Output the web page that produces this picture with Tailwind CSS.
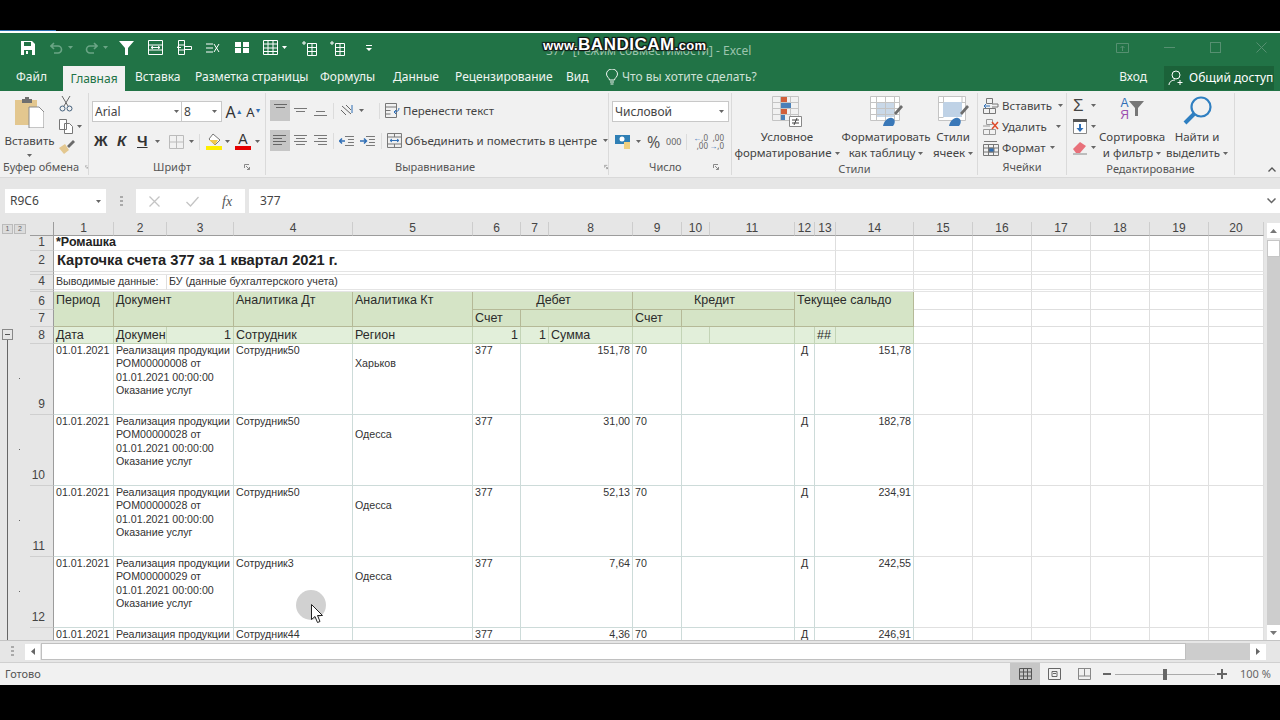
<!DOCTYPE html>
<html lang="ru">
<head>
<meta charset="utf-8">
<title>Excel</title>
<script src="https://cdn.jsdelivr.net/npm/@tailwindcss/browser@4"></script>
</head>
<body class="bg-black">
<div class="relative w-[1280px] h-[720px] overflow-hidden bg-black font-['Noto_Sans',sans-serif] text-[#444]">
  <div class="h-[30px]"></div>
  <div class="h-px w-[56px] bg-[#2b6fb0]"></div>
  <div class="h-[2px] bg-white"></div>

  <!-- title bar -->
  <div class="h-[29px] bg-[#217346] flex items-center pl-[21px] relative">
    <svg class="w-[14px] h-[14px]" viewBox="0 0 14 14"><path d="M0 0h11l3 3v11H0z" fill="#fff"/><path d="M3 1h7v4H3zM3 9h8v5H3z" fill="#217346"/><path d="M5 10h2v3H5z" fill="#fff"/></svg>
    <svg class="w-[13px] h-[12px] ml-[15px]" viewBox="0 0 13 12" fill="none" stroke="#6aa585" stroke-width="1.6"><path d="M4 1 1 4l3 3M1 4h7a3.5 3.5 0 0 1 0 7H4"/></svg>
    <svg class="w-[5px] h-[3px] ml-[5px]" viewBox="0 0 5 3"><path d="M0 0h5L2.500 3z" fill="#6aa585"/></svg>
    <svg class="w-[13px] h-[12px] ml-[12px]" viewBox="0 0 13 12" fill="none" stroke="#6aa585" stroke-width="1.6"><path d="m9 1 3 3-3 3M12 4H5a3.500 3.500 0 0 0 0 7h4"/></svg>
    <svg class="w-[5px] h-[3px] ml-[5px]" viewBox="0 0 5 3"><path d="M0 0h5L2.500 3z" fill="#6aa585"/></svg>
    <svg class="w-[15px] h-[14px] ml-[11px]" viewBox="0 0 15 14"><path d="M0 0h15L9 7v7H6V7z" fill="#fff"/></svg>
    <svg class="w-[15px] h-[15px] ml-[14px]" viewBox="0 0 15 15" fill="none" stroke="#fff"><path d="M.5.500h14v14H.5zM.5 5h14M.5 10h14M3 7.500h9M3 7.500l2-1.500M3 7.500 5 9M12 7.500 10 6M12 7.500 10 9"/></svg>
    <svg class="w-[15px] h-[15px] ml-[14px]" viewBox="0 0 15 15" fill="none" stroke="#fff"><path d="M1.500.500h6v14h-6zM1.500 5h6M1.500 10h6M8 6.500h6.500v3H8M4 7.500H0M0 7.500l2-1.500"/></svg>
    <svg class="w-[14px] h-[12px] ml-[14px]" viewBox="0 0 14 12" fill="none" stroke="#fff"><path d="M0 2h7M0 6h7M0 10h7M8 2l5 8M13 2l-5 8"/></svg>
    <svg class="w-[14px] h-[11px] ml-[15px]" viewBox="0 0 14 11"><path d="M0 0h6v5H0zM8 0h6v5H8zM0 6h6v5H0zM8 6h6v5H8z" fill="#fff"/></svg>
    <svg class="w-[15px] h-[15px] ml-[14px]" viewBox="0 0 15 15" fill="none" stroke="#fff"><path d="M.5.500h14v14H.5zM5 .500v14M10 .500v14M.5 4h14M.5 8h14M.5 11.500h14"/></svg>
    <svg class="w-[5px] h-[3px] ml-[4px]" viewBox="0 0 5 3"><path d="M0 0h5L2.500 3z" fill="#fff"/></svg>
    <svg class="w-[16px] h-[16px] ml-[15px]" viewBox="0 0 16 16" fill="none" stroke="#fff"><path d="M5.500 3.500h9v12h-9zM10 3.500v12M5.500 7.500h9M5.500 11.500h9M0 3h4M2 1v4"/></svg>
    <svg class="w-[16px] h-[16px] ml-[12px]" viewBox="0 0 16 16" fill="none" stroke="#fff"><path d="M5.500 3.500h9v12h-9zM10 3.500v12M5.500 7.500h9M5.500 11.500h9M0 3h4M2 1v4"/></svg>
    <svg class="w-[6px] h-[6px] ml-[20px]" viewBox="0 0 6 6"><path d="M0 0h6v1H0zM0 3h6L3 6z" fill="#fff"/></svg>
    <span class="absolute left-[546px] top-[10px] text-[12px] leading-[16px] text-[#9cc4ad] whitespace-nowrap">377&nbsp; [Режим совместимости] - Excel</span>
    <span class="ml-auto flex items-center pr-[13px]">
      <svg class="w-[13px] h-[10px]" viewBox="0 0 13 10" fill="none" stroke="#569071"><path d="M.5.500h12v9H.5zM6.500 8V3M4.500 5l2-2 2 2"/></svg>
      <span class="w-[11px] h-px bg-[#569071] ml-[35px]"></span>
      <span class="w-[11px] h-[11px] border border-[#569071] ml-[35px]"></span>
      <svg class="w-[11px] h-[11px] ml-[35px]" viewBox="0 0 11 11" fill="none" stroke="#569071"><path d="m.5.500 10 10M10.500.500l-10 10"/></svg>
    </span>
  </div>

  <!-- tabs -->
  <div class="h-[29px] bg-[#217346] flex items-center pl-[16px] text-[12px] text-[#f0f5f2]">
    <span class="w-[47px]">Файл</span>
    <span class="w-[62px] h-[25px] self-end bg-[#f1f1f1] text-[#217346] flex items-center justify-center">Главная</span>
    <span class="w-[60px] ml-[10px]">Вставка</span>
    <span class="w-[125px]">Разметка страницы</span>
    <span class="w-[73px]">Формулы</span>
    <span class="w-[62px]">Данные</span>
    <span class="w-[111px]">Рецензирование</span>
    <span class="w-[40px]">Вид</span>
    <svg class="w-[12px] h-[16px] mr-[4px]" viewBox="0 0 12 16" fill="none" stroke="#f0f5f2"><path d="M3.500 11c0-2-3-3-3-6a5.500 5 0 0 1 11 0c0 3-3 4-3 6zM4 13h4M4.500 15h3"/></svg>
    <span class="text-[#cfe0d6]">Что вы хотите сделать?</span>
    <span class="ml-auto mr-[17px]">Вход</span>
    <span class="w-[110px] h-[24px] self-end mb-[1px] mr-[6px] bg-[#1b6239] flex items-center pl-[4px] text-white">
      <svg class="w-[17px] h-[16px] mr-[4px]" viewBox="0 0 17 16" fill="none" stroke="#fff"><circle cx="8" cy="5" r="4"/><path d="M1 15c0-3 3-5 6-5M12 10v5M9.500 12.500h5"/></svg>
      Общий доступ
    </span>
  </div>

  <!-- ribbon -->
  <div class="h-[87px] bg-[#f1f1f1] flex text-[11.5px] text-[#444] border-b border-[#d9d9d9]">
    <!-- clipboard -->
    <div class="w-[89px] shrink-0 flex flex-col border-r border-[#dadada] my-[2px]">
      <div class="flex-1 flex">
        <div class="w-[59px] flex flex-col items-center pt-[4px]">
          <svg class="w-[29px] h-[31px]" viewBox="0 0 29 31"><path d="M0 3h22v25H0z" fill="#e3c78f"/><path d="M7 2h3V0h4v2h3v4H7z" fill="#6f6f6f"/><path d="M14 10h10l5 5v16H14z" fill="#fff" stroke="#8a8a8a"/></svg>
          <span class="mt-[5px] leading-[15px]">Вставить</span>
          <svg class="w-[5px] h-[3px] mt-[6px]" viewBox="0 0 5 3"><path d="M0 0h5L2.500 3z" fill="#666"/></svg>
        </div>
        <div class="flex flex-col pl-[-1px] pt-[3px]">
          <svg class="w-[14px] h-[16px]" viewBox="0 0 14 16" fill="none" stroke="#44607c"><path d="m3 0 6 10M11 0 5 10" stroke="#666"/><circle cx="3.500" cy="12.500" r="2.500"/><circle cx="10.500" cy="12.500" r="2.500"/></svg>
          <div class="flex items-center mt-[7px]">
            <svg class="w-[14px] h-[15px]" viewBox="0 0 14 15" fill="#fff" stroke="#777"><path d="M.5.500h7v10h-7zM5.500 4.500h5l3 3v7h-8z"/></svg>
            <svg class="w-[5px] h-[3px] ml-[4px]" viewBox="0 0 5 3"><path d="M0 0h5L2.500 3z" fill="#666"/></svg>
          </div>
          <svg class="w-[16px] h-[14px] mt-[6px]" viewBox="0 0 16 14"><path d="M0 8 6 4l4 6-5 4z" fill="#e3c78f"/><path d="m8 6 6-6 2 2-6 6z" fill="#6a6a6a"/></svg>
        </div>
      </div>
      <div class="h-[16px] flex items-center pl-[3px] text-[11px] text-[#555] whitespace-nowrap">Буфер обмена
        <svg class="w-[6px] h-[6px] ml-[6px]" viewBox="0 0 6 6" fill="none" stroke="#888"><path d="M.5 4V.5H5M2 2l3.500 3.500M5.500 3v2.500H3"/></svg>
      </div>
    </div>
    <!-- font -->
    <div class="w-[177px] shrink-0 flex flex-col border-r border-[#dadada] my-[2px]">
      <div class="flex-1 flex flex-col pl-[3px] pt-[8px]">
        <div class="flex items-center h-[21px]">
          <div class="w-[91px] h-[21px] bg-white border border-[#c8c8c8] flex items-center justify-between px-[2px] text-[12px]">Arial<svg class="w-[5px] h-[3px]" viewBox="0 0 5 3"><path d="M0 0h5L2.500 3z" fill="#666"/></svg></div>
          <div class="w-[41px] h-[21px] bg-white border border-[#c8c8c8] border-l-0 flex items-center justify-between px-[2px] text-[12px]">8<svg class="w-[5px] h-[3px] mr-[2px]" viewBox="0 0 5 3"><path d="M0 0h5L2.500 3z" fill="#666"/></svg></div>
          <span class="ml-[3px] w-[20px] text-[16px] leading-[20px] text-[#333]">A<sup class="text-[7px] text-[#2f6eb5]">▲</sup></span>
          <span class="w-[20px] text-[13px] leading-[20px] text-[#333] pl-[1px] whitespace-nowrap">A<sup class="text-[7px] text-[#2f6eb5]">▼</sup></span>
        </div>
        <div class="flex items-center h-[21px] mt-[9px] pl-[2px] text-[#333]">
          <span class="w-[23px] text-[15px] font-bold font-['Liberation_Sans',sans-serif]">Ж</span>
          <span class="w-[20px] text-[15px] font-bold italic font-['Liberation_Sans',sans-serif]">К</span>
          <span class="w-[17px] text-[15px] font-bold underline font-['Liberation_Sans',sans-serif]">Ч</span>
          <svg class="w-[5px] h-[3px] ml-[1px]" viewBox="0 0 5 3"><path d="M0 0h5L2.500 3z" fill="#666"/></svg>
          <svg class="w-[15px] h-[14px] ml-[9px]" viewBox="0 0 15 14" fill="none" stroke="#bbb"><path d="M.5.500h14v13H.5zM7.500.500v13M.5 7h14"/></svg>
          <svg class="w-[5px] h-[3px] ml-[5px]" viewBox="0 0 5 3"><path d="M0 0h5L2.500 3z" fill="#666"/></svg>
          <span class="w-px h-[16px] bg-[#dcdcdc] ml-[5px]"></span>
          <div class="ml-[6px] w-[16px] flex flex-col">
            <svg class="w-[16px] h-[13px]" viewBox="0 0 16 13"><path d="m7 1 7 6-5 5-6-6z" fill="#fff" stroke="#777"/><path d="M3 7h9l-3 5z" fill="#f2c94c"/></svg>
            <span class="h-[4px] bg-[#ffee00]"></span>
          </div>
          <svg class="w-[5px] h-[3px] ml-[3px]" viewBox="0 0 5 3"><path d="M0 0h5L2.500 3z" fill="#666"/></svg>
          <div class="ml-[5px] w-[16px] flex flex-col items-center">
            <span class="text-[14px] leading-[13px] font-['Liberation_Sans',sans-serif] text-[#333]">A</span>
            <span class="h-[4px] w-[16px] bg-[#e60000]"></span>
          </div>
          <svg class="w-[5px] h-[3px] ml-[4px]" viewBox="0 0 5 3"><path d="M0 0h5L2.500 3z" fill="#666"/></svg>
        </div>
      </div>
      <div class="h-[16px] flex items-center text-[11px] text-[#555] pl-[64px]">Шрифт
        <svg class="w-[6px] h-[6px] ml-[53px]" viewBox="0 0 6 6" fill="none" stroke="#888"><path d="M.5 4V.5H5M2 2l3.500 3.500M5.500 3v2.500H3"/></svg>
      </div>
    </div>
    <!-- alignment -->
    <div class="w-[343px] shrink-0 flex flex-col border-r border-[#dadada] my-[2px]">
      <div class="flex-1 flex flex-col pl-[4px] pt-[7px]">
        <div class="flex items-center h-[21px]">
          <span class="w-[20px] h-[21px] bg-[#c6c6c6] flex justify-center pt-[4px]"><svg class="w-[13px] h-[6px]" viewBox="0 0 13 6" stroke="#666"><path d="M0 .500h13M2 3.500h9"/></svg></span>
          <svg class="w-[13px] h-[6px] ml-[4px]" viewBox="0 0 13 6" stroke="#777"><path d="M0 .500h13M2 3.500h9"/></svg>
          <svg class="w-[13px] h-[6px] ml-[7px] mt-[6px]" viewBox="0 0 13 6" stroke="#777"><path d="M2 .500h9M0 4.500h13"/></svg>
          <span class="w-px h-[16px] bg-[#dcdcdc] ml-[6px]"></span>
          <svg class="w-[15px] h-[14px] ml-[6px]" viewBox="0 0 15 14" fill="none" stroke="#666"><path d="m2 2 9 8M1 6l5 5M6 1l5 5"/><path d="M12 1v8" stroke="#2f6eb5"/></svg>
          <svg class="w-[5px] h-[3px] ml-[4px]" viewBox="0 0 5 3"><path d="M0 0h5L2.500 3z" fill="#666"/></svg>
          <span class="w-px h-[16px] bg-[#dcdcdc] ml-[15px]"></span>
          <svg class="w-[15px] h-[15px] ml-[5px] mr-[3px]" viewBox="0 0 15 15" fill="none" stroke="#777"><path d="M.5.500h11v14H.5zM.5 4h11M.5 7.500h5M.5 11h5"/><path d="M14 5c0 3-2 4-5 4m2-2-2 2 2 2" stroke="#2f6eb5"/></svg>
          <span class="text-[11.5px]">Перенести текст</span>
        </div>
        <div class="flex items-center h-[21px] mt-[9px]">
          <span class="w-[20px] h-[21px] bg-[#c6c6c6] flex items-center justify-center"><svg class="w-[13px] h-[13px]" viewBox="0 0 13 13" stroke="#666"><path d="M0 1.500h13M0 4.500h9M0 7.500h13M0 10.500h9"/></svg></span>
          <svg class="w-[13px] h-[13px] ml-[4px]" viewBox="0 0 13 13" stroke="#777"><path d="M0 1.500h13M2 4.500h9M0 7.500h13M2 10.500h9"/></svg>
          <svg class="w-[13px] h-[13px] ml-[7px]" viewBox="0 0 13 13" stroke="#777"><path d="M0 1.500h13M4 4.500h9M0 7.500h13M4 10.500h9"/></svg>
          <span class="w-px h-[16px] bg-[#dcdcdc] ml-[6px]"></span>
          <svg class="w-[15px] h-[12px] ml-[5px]" viewBox="0 0 15 12" fill="none"><path d="M6 1.500h9M9 4.500h6M9 7.500h6M6 10.500h9" stroke="#777"/><path d="M6 6H1M3 3.500.5 6 3 8.500" stroke="#2f6eb5" stroke-width="1.500"/></svg>
          <svg class="w-[15px] h-[12px] ml-[6px]" viewBox="0 0 15 12" fill="none"><path d="M6 1.500h9M9 4.500h6M9 7.500h6M6 10.500h9" stroke="#777"/><path d="M0 6h6M4 3.500 6.500 6 4 8.500" stroke="#2f6eb5" stroke-width="1.500"/></svg>
          <span class="w-px h-[16px] bg-[#dcdcdc] ml-[6px]"></span>
          <svg class="w-[15px] h-[15px] ml-[5px] mr-[3px]" viewBox="0 0 15 15" fill="none" stroke="#777"><path d="M.5.500h14v14H.5zM.5 4h14M.5 11h14M7.500.500V4M7.500 11v3.500"/><path d="M3 7.500h9M3 7.500l2-1.500M3 7.500 5 9M12 7.500 10 6M12 7.500 10 9" stroke="#2f6eb5"/></svg>
          <span class="text-[11.5px] whitespace-nowrap">Объединить и поместить в центре</span>
          <svg class="w-[5px] h-[3px] ml-[6px]" viewBox="0 0 5 3"><path d="M0 0h5L2.500 3z" fill="#666"/></svg>
        </div>
      </div>
      <div class="h-[16px] flex items-center text-[11px] text-[#555] pl-[129px]">Выравнивание
        <svg class="w-[6px] h-[6px] ml-[129px]" viewBox="0 0 6 6" fill="none" stroke="#888"><path d="M.5 4V.5H5M2 2l3.500 3.500M5.500 3v2.500H3"/></svg>
      </div>
    </div>
    <!-- number -->
    <div class="w-[123px] shrink-0 flex flex-col border-r border-[#dadada] my-[2px]">
      <div class="flex-1 flex flex-col pl-[3px] pt-[8px]">
        <div class="w-[117px] h-[21px] bg-white border border-[#c8c8c8] flex items-center justify-between px-[2px] text-[12px]">Числовой<svg class="w-[5px] h-[3px] mr-[2px]" viewBox="0 0 5 3"><path d="M0 0h5L2.500 3z" fill="#666"/></svg></div>
        <div class="flex items-center h-[21px] mt-[9px] pl-[3px]">
          <svg class="w-[16px] h-[15px]" viewBox="0 0 16 15"><path d="M0 1h15v9H0z" fill="#2f7fb5"/><circle cx="7" cy="5" r="2.500" fill="#fff"/><path d="M9 8h6v7H9z" fill="#f0d080"/></svg>
          <svg class="w-[5px] h-[3px] ml-[5px]" viewBox="0 0 5 3"><path d="M0 0h5L2.500 3z" fill="#666"/></svg>
          <span class="ml-[6px] text-[16px] text-[#555] w-[17px]">%</span>
          <span class="ml-[2px] text-[9px] text-[#666] w-[15px]">000</span>
          <span class="w-px h-[16px] bg-[#dcdcdc] ml-[5px]"></span>
          <span class="ml-[6px] text-[8px] leading-[8px] text-[#666] w-[15px] text-right"><span class="text-[#2f6eb5]">←</span>,0<br>,00</span>
          <span class="ml-[1px] text-[8px] leading-[8px] text-[#666] w-[15px] text-right">,00<br><span class="text-[#2f6eb5]">→</span>,0</span>
        </div>
      </div>
      <div class="h-[16px] flex items-center text-[11px] text-[#555] pl-[40px]">Число
        <svg class="w-[6px] h-[6px] ml-[31px]" viewBox="0 0 6 6" fill="none" stroke="#888"><path d="M.5 4V.5H5M2 2l3.500 3.500M5.500 3v2.500H3"/></svg>
      </div>
    </div>
    <!-- styles -->
    <div class="w-[246px] shrink-0 flex flex-col border-r border-[#dadada] my-[2px]">
      <div class="flex-1 flex pt-[3px] leading-[16px] text-center">
        <div class="w-[106px] pl-[4px] flex flex-col items-center">
          <svg class="w-[30px] h-[31px] mb-[2px]" viewBox="0 0 30 31" fill="none"><path d="M.5.500h26v24H.5zM.5 6.500h26M.5 12.500h26M.5 18.500h26M8.500.500v24M18.500.500v24" stroke="#c4c4c4"/><path d="M9 1h6v5H9z" fill="#d2603a"/><path d="M9 7h10v5H9z" fill="#4a80b8"/><path d="M9 13h6v5H9z" fill="#d2603a"/><path d="M9 19h4v5H9z" fill="#4a80b8"/><path d="M17.500 20.500h12v10h-12z" fill="#fff" stroke="#888"/><path d="M20 24h7M20 27h7M25 22l-3 7" stroke="#444"/></svg>
          <span class="whitespace-nowrap">Условное</span>
          <span class="whitespace-nowrap">форматирование <svg class="inline align-middle w-[5px] h-[3px]" viewBox="0 0 5 3"><path d="M0 0h5L2.500 3z" fill="#666"/></svg></span>
        </div>
        <div class="w-[92px] pl-[4px] flex flex-col items-center">
          <svg class="w-[33px] h-[31px] mb-[2px]" viewBox="0 0 33 31" fill="none"><path d="M.5.500h29v24H.5z" fill="#fff" stroke="#c4c4c4"/><path d="M6 6h18v15H6z" fill="#c9d8e8"/><path d="M.5 6.500h29M.5 12.500h29M.5 18.500h29M6.500.500v24M15.500.500v24M24.500.500v24" stroke="#c4c4c4"/><path d="m24 17 7-8 2 2-7 8z" fill="#6d6d6d"/><path d="M13 30c1-5 5-9 9-8s3 6 1 8z" fill="#3a78b8"/></svg>
          <span class="whitespace-nowrap">Форматировать</span>
          <span class="whitespace-nowrap">как таблицу <svg class="inline align-middle w-[5px] h-[3px]" viewBox="0 0 5 3"><path d="M0 0h5L2.500 3z" fill="#666"/></svg></span>
        </div>
        <div class="w-[46px] flex flex-col items-center">
          <svg class="w-[31px] h-[31px] mb-[2px]" viewBox="0 0 31 31" fill="none"><path d="M.5.500h27v24H.5z" fill="#fff" stroke="#c4c4c4"/><path d="M5 6h19v15H5z" fill="#bfd2e6"/><path d="M.5 6.500h5M24 6.500h4M.5 21.500h5M5.500.500v6M24 .500v6" stroke="#c4c4c4"/><path d="m22 17 7-8 2 2-7 8z" fill="#6d6d6d"/><path d="M11 30c1-5 5-9 9-8s3 6 1 8z" fill="#3a78b8"/></svg>
          <span class="whitespace-nowrap">Стили</span>
          <span class="whitespace-nowrap">ячеек <svg class="inline align-middle w-[5px] h-[3px]" viewBox="0 0 5 3"><path d="M0 0h5L2.500 3z" fill="#666"/></svg></span>
        </div>
      </div>
      <div class="h-[16px] flex items-center justify-center text-[11px] text-[#555]">Стили</div>
    </div>
    <!-- cells -->
    <div class="w-[89px] shrink-0 flex flex-col border-r border-[#dadada] my-[2px]">
      <div class="flex-1 flex flex-col pl-[5px] pt-[2px]">
        <div class="flex items-center h-[21px]">
          <svg class="w-[16px] h-[16px] mr-[3px]" viewBox="0 0 16 16" fill="none" stroke="#777"><path d="M3.500.500h6v5h-6zM.5 10.500h12v5H.5zM6.500 10.500v5M9 6h6v3H9"/><path d="M7 8H1M3 6 1 8l2 2" stroke="#2f6eb5"/></svg>Вставить
          <svg class="w-[5px] h-[3px] ml-[6px]" viewBox="0 0 5 3"><path d="M0 0h5L2.500 3z" fill="#666"/></svg>
        </div>
        <div class="flex items-center h-[21px]">
          <svg class="w-[16px] h-[16px] mr-[3px]" viewBox="0 0 16 16" fill="none" stroke="#999"><path d="M3.500.500h6v5h-6zM.5 10.500h12v5H.5zM6.500 10.500v5M0 7h7"/><path d="m9 3 6 7M15 3l-6 7" stroke="#e04b2b" stroke-width="1.500"/></svg>Удалить
          <svg class="w-[5px] h-[3px] ml-[9px]" viewBox="0 0 5 3"><path d="M0 0h5L2.500 3z" fill="#666"/></svg>
        </div>
        <div class="flex items-center h-[21px]">
          <svg class="w-[16px] h-[16px] mr-[3px]" viewBox="0 0 16 16" fill="none" stroke="#777"><path d="M.5 4.500h15v11H.5zM5.500 4.500v11M10.500 4.500v11M.5 8h15M.5 12h15M1 1.500h13"/><path d="M6 8h5v4H6z" fill="#2f6eb5"/></svg>Формат
          <svg class="w-[5px] h-[3px] ml-[4px]" viewBox="0 0 5 3"><path d="M0 0h5L2.500 3z" fill="#666"/></svg>
        </div>
      </div>
      <div class="h-[16px] flex items-center justify-center text-[11px] text-[#555]">Ячейки</div>
    </div>
    <!-- editing -->
    <div class="w-[168px] shrink-0 flex flex-col border-r border-[#dadada] my-[2px]">
      <div class="flex-1 flex">
        <div class="w-[38px] flex flex-col pl-[6px] pt-[2px]">
          <div class="flex items-center h-[21px]"><span class="w-[14px] text-[17px] leading-[18px] text-[#444] font-['Liberation_Sans',sans-serif]">Σ</span><svg class="w-[5px] h-[3px] ml-[4px]" viewBox="0 0 5 3"><path d="M0 0h5L2.500 3z" fill="#666"/></svg></div>
          <div class="flex items-center h-[21px]"><svg class="w-[14px] h-[15px]" viewBox="0 0 14 15"><path d="M.5 2.500h13v12H.5z" fill="#fff" stroke="#888"/><path d="M0 0h14v3H0z" fill="#555"/><path d="M6 5h2v4h2.500L7 13 3.500 9H6z" fill="#2f6eb5"/></svg><svg class="w-[5px] h-[3px] ml-[4px]" viewBox="0 0 5 3"><path d="M0 0h5L2.500 3z" fill="#666"/></svg></div>
          <div class="flex items-center h-[21px]"><svg class="w-[14px] h-[14px]" viewBox="0 0 14 14"><path d="m0 8 7-7 6 4-6 7H3z" fill="#e8707a"/><path d="M0 13h14" stroke="#888"/></svg><svg class="w-[5px] h-[3px] ml-[4px]" viewBox="0 0 5 3"><path d="M0 0h5L2.500 3z" fill="#666"/></svg></div>
        </div>
        <div class="w-[64px] -ml-[5px] flex flex-col items-center pt-[4px] leading-[16px] text-center">
          <div class="h-[30px] flex items-start">
            <span class="text-[12px] leading-[12px] font-['Liberation_Sans',sans-serif] text-center"><span class="text-[#2f6eb5]">А</span><br><span class="text-[#9b4fb0]">Я</span></span>
            <svg class="w-[15px] h-[15px] mt-[4px]" viewBox="0 0 15 15"><path d="M0 0h15L9 7v8H6V7z" fill="#777"/></svg>
          </div>
          <span class="whitespace-nowrap mt-[2px]">Сортировка</span>
          <span class="whitespace-nowrap">и фильтр <svg class="inline align-middle w-[5px] h-[3px]" viewBox="0 0 5 3"><path d="M0 0h5L2.500 3z" fill="#666"/></svg></span>
        </div>
        <div class="w-[66px] flex flex-col items-center pt-[3px] leading-[16px] text-center">
          <svg class="w-[29px] h-[29px] mb-[4px]" viewBox="0 0 29 29" fill="none" stroke="#2f7fc1"><circle cx="18" cy="11" r="9.500" stroke-width="2.200"/><path d="m11 18-9 9" stroke-width="4"/></svg>
          <span class="whitespace-nowrap">Найти и</span>
          <span class="whitespace-nowrap">выделить <svg class="inline align-middle w-[5px] h-[3px]" viewBox="0 0 5 3"><path d="M0 0h5L2.500 3z" fill="#666"/></svg></span>
        </div>
      </div>
      <div class="h-[16px] flex items-center justify-center text-[11px] text-[#555]">Редактирование</div>
    </div>
    <div class="flex-1 flex items-end justify-end pr-[4px] pb-[5px]">
      <svg class="w-[8px] h-[5px]" viewBox="0 0 8 5" fill="none" stroke="#555" stroke-width="1.300"><path d="m.5 4.500 3.500-3.500 3.500 3.500"/></svg>
    </div>
  </div>

  <!-- formula bar -->
  <div class="h-[44px] bg-[#e6e6e6] flex pl-[5px] pt-[11px] text-[12px] text-[#444]">
    <div class="w-[101px] h-[24px] bg-white flex items-center justify-between pl-[5px] pr-[5px]">R9C6<svg class="w-[5px] h-[3px]" viewBox="0 0 5 3"><path d="M0 0h5L2.500 3z" fill="#666"/></svg></div>
    <svg class="w-[3px] h-[11px] ml-[14px] mr-[13px] mt-[7px]" viewBox="0 0 3 11" fill="#aaa"><path d="M0 0h3v2H0zM0 4h3v2H0zM0 8h3v2H0z"/></svg>
    <div class="w-[109px] h-[24px] bg-white flex items-center pl-[13px]">
      <svg class="w-[11px] h-[11px]" viewBox="0 0 11 11" fill="none" stroke="#c4c4c4" stroke-width="1.300"><path d="m.5.500 10 10M10.500.500l-10 10"/></svg>
      <svg class="w-[13px] h-[11px] ml-[26px]" viewBox="0 0 13 11" fill="none" stroke="#c4c4c4" stroke-width="1.300"><path d="m.5 6 4 4 8-9"/></svg>
      <span class="ml-[23px] font-['Liberation_Serif',serif] italic text-[14px] text-[#555]">fx</span>
    </div>
    <div class="ml-[4px] flex-1 h-[24px] bg-white flex items-center justify-between pl-[11px] pr-[4px]">377
      <svg class="w-[9px] h-[6px]" viewBox="0 0 9 6" fill="none" stroke="#666" stroke-width="1.500"><path d="m.5.500 4 4 4-4"/></svg>
    </div>
  </div>

  <!-- sheet -->
  <div class="h-[418px] flex overflow-hidden bg-[#e6e6e6] font-['Liberation_Sans',sans-serif]">
    <div class="w-[30px] shrink-0 pl-[2px] pt-[2px]">
      <div class="flex gap-[1px]">
        <span class="w-[11px] h-[10px] bg-[#dcdcdc] border border-[#bbb] text-[7px] leading-[8px] text-center text-[#666]">1</span>
        <span class="w-[12px] h-[10px] bg-[#dcdcdc] border border-[#bbb] text-[7px] leading-[8px] text-center text-[#666]">2</span>
      </div>
      <div class="w-[11px] h-[11px] mt-[95px] border border-[#888] flex items-center justify-center"><span class="w-[5px] h-px bg-[#555]"></span></div>
      <div class="relative ml-[5px] w-px h-[300px] bg-[#666]">
        <span class="absolute left-[12px] top-[38px] w-px h-px bg-[#666]"></span>
        <span class="absolute left-[12px] top-[109px] w-px h-px bg-[#666]"></span>
        <span class="absolute left-[12px] top-[180px] w-px h-px bg-[#666]"></span>
        <span class="absolute left-[12px] top-[251px] w-px h-px bg-[#666]"></span>
      </div>
    </div>

    <table class="w-[1234px] shrink-0 table-fixed border-separate border-spacing-0 self-start text-[10.67px] leading-[13.3px] text-[#333]">
      <colgroup>
        <col class="w-[24px]"><col class="w-[60px]"><col class="w-[53px]"><col class="w-[67px]"><col class="w-[119px]"><col class="w-[120px]"><col class="w-[48px]"><col class="w-[28px]"><col class="w-[84px]"><col class="w-[49px]"><col class="w-[28px]"><col class="w-[85px]"><col class="w-[20px]"><col class="w-[21px]"><col class="w-[78px]"><col class="w-[59px]"><col class="w-[59px]"><col class="w-[59px]"><col class="w-[59px]"><col class="w-[59px]"><col class="w-[55px]">
      </colgroup>
      <!-- column letters -->
      <tbody class="[&_td]:h-[14px] [&_td]:p-0 [&_td]:text-center [&_td]:text-[12px] [&_td]:leading-[13px] [&_td]:text-[#444] [&_td]:border-b [&_td]:border-b-[#9c9c9c] [&_td]:border-r [&_td]:border-r-[#cdcdcd]">
        <tr><td class="border-r-[#9c9c9c]!"></td><td>1</td><td>2</td><td>3</td><td>4</td><td>5</td><td>6</td><td>7</td><td>8</td><td>9</td><td>10</td><td>11</td><td>12</td><td>13</td><td>14</td><td>15</td><td>16</td><td>17</td><td>18</td><td>19</td><td>20</td></tr>
      </tbody>
      <!-- title rows -->
      <tbody class="bg-white [&_td]:p-0 [&_td]:overflow-visible [&_td]:border-b [&_td]:border-b-[#e4e4e4] [&_td]:border-r [&_td]:border-r-[#dedede] [&_.rh]:bg-[#e6e6e6] [&_.rh]:text-right [&_.rh]:pr-[8px] [&_.rh]:text-[12px] [&_.rh]:text-[#444] [&_.rh]:border-r-[#9c9c9c] [&_.rh]:border-b-[#cfcfcf]">
        <tr>
          <td class="rh h-[15px]">1</td>
          <td colspan="13" class="h-[15px] pl-[2px]! text-[12.500px] font-bold text-[#222] whitespace-nowrap">*Ромашка</td>
          <td></td><td></td><td></td><td></td><td></td><td></td><td></td>
        </tr>
        <tr>
          <td class="rh h-[21px]">2</td>
          <td colspan="13" class="h-[21px] pl-[3px]! text-[14.670px] font-bold text-[#222] whitespace-nowrap">Карточка счета 377 за 1 квартал 2021 г.</td>
          <td></td><td></td><td></td><td></td><td></td><td></td><td></td>
        </tr>
        <tr><td class="rh h-[3px]"></td><td colspan="13" class="h-[3px]"></td><td></td><td></td><td></td><td></td><td></td><td></td><td></td></tr>
        <tr>
          <td class="rh h-[15px]">4</td>
          <td colspan="2" class="h-[15px] pl-[2px]! whitespace-nowrap">Выводимые данные:</td>
          <td colspan="11" class="pl-[2px]! whitespace-nowrap">БУ (данные бухгалтерского учета)</td>
          <td></td><td></td><td></td><td></td><td></td><td></td><td></td>
        </tr>
        <tr><td class="rh h-[2px]"></td><td colspan="13" class="h-[2px]"></td><td></td><td></td><td></td><td></td><td></td><td></td><td></td></tr>
      </tbody>
      <!-- header rows -->
      <tbody class="text-[12.500px] leading-[16px] text-[#2b2b2b] [&_td]:p-0 [&_td]:pl-[2px] [&_td]:border-b [&_td]:border-r [&_td]:border-[#b5b997] [&_td]:bg-[#d5e4c6] [&_td]:align-top [&_td]:whitespace-nowrap [&_.rh]:bg-[#e6e6e6]! [&_.rh]:text-right [&_.rh]:pr-[8px] [&_.rh]:text-[12px] [&_.rh]:text-[#444] [&_.rh]:border-r-[#9c9c9c] [&_.rh]:border-b-[#cfcfcf] [&_.rh]:align-middle [&_.g]:bg-white! [&_.g]:border-[#dedede]! [&_.l]:bg-[#e2efda]! [&_.l]:border-[#c3d4b6]!">
        <tr>
          <td class="rh h-[18px]">6</td>
          <td rowspan="2">Период</td>
          <td rowspan="2" colspan="2">Документ</td>
          <td rowspan="2">Аналитика Дт</td>
          <td rowspan="2">Аналитика Кт</td>
          <td colspan="3" class="text-center">Дебет</td>
          <td colspan="3" class="text-center">Кредит</td>
          <td rowspan="2" colspan="3">Текущее сальдо</td>
          <td class="g"></td><td class="g"></td><td class="g"></td><td class="g"></td><td class="g"></td><td class="g"></td>
        </tr>
        <tr>
          <td class="rh h-[17px]">7</td>
          <td>Счет</td><td colspan="2"></td>
          <td>Счет</td><td colspan="2"></td>
          <td class="g"></td><td class="g"></td><td class="g"></td><td class="g"></td><td class="g"></td><td class="g"></td>
        </tr>
        <tr>
          <td class="rh h-[16px]">8</td>
          <td class="l">Дата</td>
          <td class="l overflow-hidden">Документ</td>
          <td class="l text-right pr-[2px]!">1</td>
          <td class="l">Сотрудник</td>
          <td class="l">Регион</td>
          <td class="l text-right pr-[2px]!">1</td>
          <td class="l text-right pr-[2px]!">1</td>
          <td class="l">Сумма</td>
          <td class="l"></td><td class="l"></td><td class="l"></td><td class="l"></td>
          <td class="l overflow-hidden">##</td>
          <td class="l"></td>
          <td class="g"></td><td class="g"></td><td class="g"></td><td class="g"></td><td class="g"></td><td class="g"></td>
        </tr>
      </tbody>
      <!-- data rows -->
      <tbody class="bg-white [&_td]:p-0 [&_td]:px-[2px] [&_td]:h-[71px] [&_td]:align-top [&_td]:border-b [&_td]:border-r [&_td]:border-[#cddbd9] [&_.rh]:bg-[#e6e6e6] [&_.rh]:align-bottom [&_.rh]:text-right [&_.rh]:pl-0! [&_.rh]:pr-[8px]! [&_.rh]:pb-[3px]! [&_.rh]:text-[12px] [&_.rh]:text-[#444] [&_.rh]:border-r-[#9c9c9c] [&_.rh]:border-b-[#cfcfcf] [&_.g]:border-[#e0e0e0]!">
        <tr>
          <td class="rh">9</td><td>01.01.2021</td>
          <td colspan="2">Реализация продукции<br>РОМ00000008 от<br>01.01.2021 00:00:00<br>Оказание услуг</td>
          <td>Сотрудник50</td><td class="pt-[13.300px]!">Харьков</td><td>377</td>
          <td colspan="2" class="text-right">151,78</td><td>70</td><td colspan="2"></td>
          <td class="text-center">Д</td><td colspan="2" class="text-right">151,78</td>
          <td class="g"></td><td class="g"></td><td class="g"></td><td class="g"></td><td class="g"></td><td class="g"></td>
        </tr>
        <tr>
          <td class="rh">10</td><td>01.01.2021</td>
          <td colspan="2">Реализация продукции<br>РОМ00000028 от<br>01.01.2021 00:00:00<br>Оказание услуг</td>
          <td>Сотрудник50</td><td class="pt-[13.300px]!">Одесса</td><td>377</td>
          <td colspan="2" class="text-right">31,00</td><td>70</td><td colspan="2"></td>
          <td class="text-center">Д</td><td colspan="2" class="text-right">182,78</td>
          <td class="g"></td><td class="g"></td><td class="g"></td><td class="g"></td><td class="g"></td><td class="g"></td>
        </tr>
        <tr>
          <td class="rh">11</td><td>01.01.2021</td>
          <td colspan="2">Реализация продукции<br>РОМ00000028 от<br>01.01.2021 00:00:00<br>Оказание услуг</td>
          <td>Сотрудник50</td><td class="pt-[13.300px]!">Одесса</td><td>377</td>
          <td colspan="2" class="text-right">52,13</td><td>70</td><td colspan="2"></td>
          <td class="text-center">Д</td><td colspan="2" class="text-right">234,91</td>
          <td class="g"></td><td class="g"></td><td class="g"></td><td class="g"></td><td class="g"></td><td class="g"></td>
        </tr>
        <tr>
          <td class="rh">12</td><td>01.01.2021</td>
          <td colspan="2">Реализация продукции<br>РОМ00000029 от<br>01.01.2021 00:00:00<br>Оказание услуг</td>
          <td>Сотрудник3</td><td class="pt-[13.300px]!">Одесса</td><td>377</td>
          <td colspan="2" class="text-right">7,64</td><td>70</td><td colspan="2"></td>
          <td class="text-center">Д</td><td colspan="2" class="text-right">242,55</td>
          <td class="g"></td><td class="g"></td><td class="g"></td><td class="g"></td><td class="g"></td><td class="g"></td>
        </tr>
        <tr>
          <td class="rh">13</td><td>01.01.2021</td>
          <td colspan="2">Реализация продукции<br>РОМ00000029 от<br>01.01.2021 00:00:00<br>Оказание услуг</td>
          <td>Сотрудник44</td><td></td><td>377</td>
          <td colspan="2" class="text-right">4,36</td><td>70</td><td colspan="2"></td>
          <td class="text-center">Д</td><td colspan="2" class="text-right">246,91</td>
          <td class="g"></td><td class="g"></td><td class="g"></td><td class="g"></td><td class="g"></td><td class="g"></td>
        </tr>
      </tbody>
    </table>

    <!-- vertical scrollbar -->
    <div class="w-[16px] shrink-0 flex flex-col pl-[3px] pt-[1px] bg-[#e6e6e6]">
      <div class="h-[15px] bg-white flex items-center justify-center"><svg class="w-[7px] h-[4px]" viewBox="0 0 7 4"><path d="M0 4h7L3.500 0z" fill="#777"/></svg></div>
      <div class="h-[17px] mt-[2px] bg-white border border-[#c6c6c6]"></div>
      <div class="flex-1 bg-[#cdcdcd]"></div>
      <div class="h-[15px] bg-white flex items-center justify-center"><svg class="w-[7px] h-[4px]" viewBox="0 0 7 4"><path d="M0 0h7L3.500 4z" fill="#777"/></svg></div>
    </div>
  </div>

  <!-- horizontal scrollbar -->
  <div class="h-[22px] bg-[#e6e6e6] border-t border-[#c4c4c4] flex items-center pl-[11px]">
    <svg class="w-[3px] h-[11px] mr-[11px]" viewBox="0 0 3 11" fill="#aaa"><path d="M0 0h3v2H0zM0 4h3v2H0zM0 8h3v2H0z"/></svg>
    <div class="w-[15px] h-[16px] bg-white flex items-center justify-center"><svg class="w-[4px] h-[7px]" viewBox="0 0 4 7"><path d="M4 0v7L0 3.500z" fill="#666"/></svg></div>
    <div class="w-[1145px] h-[17px] ml-[1px] bg-white border border-[#c0c0c0]"></div>
    <div class="w-[64px] h-[17px] bg-[#cdcdcd]"></div>
    <div class="w-[16px] h-[16px] bg-white flex items-center justify-center"><svg class="w-[4px] h-[7px]" viewBox="0 0 4 7"><path d="M0 0v7l4-3.500z" fill="#666"/></svg></div>
  </div>

  <!-- status bar -->
  <div class="h-[23px] bg-[#f1f1f1] border-t border-[#d0d0d0] flex items-center pl-[5px] text-[11px] text-[#555]">
    <span>Готово</span>
    <div class="ml-auto flex items-center h-full pr-[11px]">
      <div class="w-[30px] h-full bg-[#c6c6c6] flex items-center justify-center">
        <svg class="w-[13px] h-[12px]" viewBox="0 0 13 12" fill="none" stroke="#555"><path d="M.5.500h12v11H.5zM4.500.500v11M8.500.500v11M.5 4h12M.5 8h12"/></svg>
      </div>
      <svg class="w-[13px] h-[12px] ml-[8px]" viewBox="0 0 13 12" fill="none" stroke="#666"><path d="M.5.500h12v11H.5zM4 3.500h5v5H4zM5 5.500h3"/></svg>
      <svg class="w-[13px] h-[12px] ml-[17px]" viewBox="0 0 13 12" fill="none" stroke="#888"><path d="M.5 0v11.500h12V0M.5 8h12M6.500 0v8M.5.500h12"/></svg>
      <span class="w-[8px] h-[2px] bg-[#666] ml-[12px]"></span>
      <span class="relative w-[100px] h-px bg-[#aaa] ml-[4px] flex justify-center">
        <span class="absolute -top-[5px] w-[4px] h-[11px] bg-[#666]"></span>
      </span>
      <svg class="w-[10px] h-[10px] ml-[2px]" viewBox="0 0 10 10" fill="#666"><path d="M4 0h2v4h4v2H6v4H4V6H0V4h4z"/></svg>
      <span class="ml-[13px] w-[29px] whitespace-nowrap text-[#666]">100 %</span>
    </div>
  </div>

  <!-- overlays -->
  <span class="absolute left-[543px] top-[35px] text-[13px] leading-[20px] font-bold font-['Liberation_Sans',sans-serif] text-white whitespace-nowrap tracking-[0.4px] [text-shadow:0_0_1px_#111,1px_1px_1px_#111,-1px_-1px_1px_#111,1px_-1px_1px_#111,-1px_1px_1px_#111]">www.<span class="text-[17px] tracking-[0.5px]">BANDICAM</span>.com</span>
  <span class="absolute left-[296px] top-[590px] w-[30px] h-[30px] rounded-full bg-[#bdbdbd]/70"></span>
  <svg class="absolute left-[311px] top-[604px] w-[13px] h-[19px]" viewBox="0 0 13 19"><path d="M.5.500v15l3.500-3 2.500 6 2.500-1-2.500-6h5z" fill="#fff" stroke="#222"/></svg>
</div>
</body>
</html>
